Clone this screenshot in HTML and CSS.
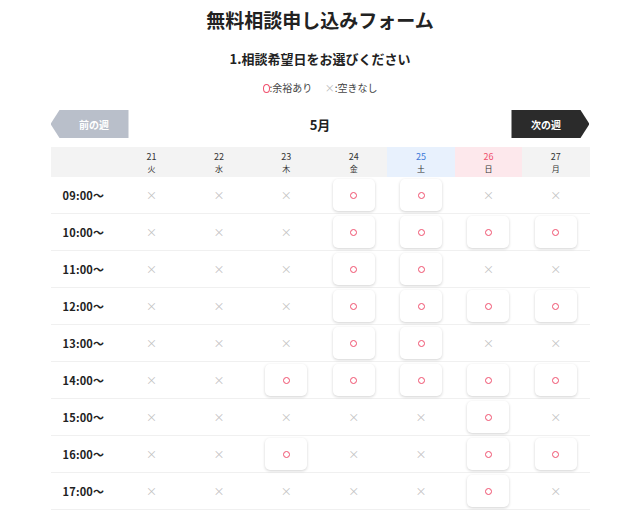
FILE: index.html
```html
<!DOCTYPE html>
<html lang="ja">
<head>
  <meta charset="UTF-8" />
  <meta name="viewport" content="width=device-width, initial-scale=1.0" />
  <title>無料相談申し込みフォーム</title>
  <link rel="stylesheet" href="styles.css">
</head>
<body>
  <h1>無料相談申し込みフォーム</h1>
  <h2>1.相談希望日をお選びください</h2>
  <p class="legend">
    <span class="mark-ok"></span>:余裕あり
    <span class="mark-ng">×</span>:空きなし
  </p>

  <div class="calendar">
    <div class="nav">
      <a class="btn-prev">前の週</a>
      <div class="month">5月</div>
      <a class="btn-next">次の週</a>
    </div>

    <div class="grid" id="grid">
      <div class="head"></div>
      <div class="head"><span class="d">21</span><span class="w">火</span></div>
      <div class="head"><span class="d">22</span><span class="w">水</span></div>
      <div class="head"><span class="d">23</span><span class="w">木</span></div>
      <div class="head"><span class="d">24</span><span class="w">金</span></div>
      <div class="head sat"><span class="d">25</span><span class="w">土</span></div>
      <div class="head sun"><span class="d">26</span><span class="w">日</span></div>
      <div class="head"><span class="d">27</span><span class="w">月</span></div>
    </div>
  </div>

  <script>
    // 0 = 空きなし, 1 = 余裕あり
    const slots = [
      ["09:00〜", [0,0,0,1,1,0,0]],
      ["10:00〜", [0,0,0,1,1,1,1]],
      ["11:00〜", [0,0,0,1,1,0,0]],
      ["12:00〜", [0,0,0,1,1,1,1]],
      ["13:00〜", [0,0,0,1,1,0,0]],
      ["14:00〜", [0,0,1,1,1,1,1]],
      ["15:00〜", [0,0,0,0,0,1,0]],
      ["16:00〜", [0,0,1,0,0,1,1]],
      ["17:00〜", [0,0,0,0,0,1,0]]
    ];

    const grid = document.getElementById("grid");
    slots.forEach(([time, days]) => {
      const t = document.createElement("div");
      t.className = "cell time";
      t.textContent = time;
      grid.appendChild(t);

      days.forEach(ok => {
        const c = document.createElement("div");
        c.className = "cell";
        if (ok) {
          c.innerHTML = '<button class="slot"><span class="ring"></span></button>';
        } else {
          c.innerHTML = '<span class="cross">×</span>';
        }
        grid.appendChild(c);
      });
    });
  </script>
</body>
</html>
```

FILE: styles.css
```css
body {
  margin: 0;
  background-color: #fff;
  color: #222;
  font-family: "Noto Sans CJK JP", "Noto Sans", sans-serif;
  text-align: center;
}
h1 {
  margin: 6px 0 0;
  font-size: 19px;
  line-height: 28px;
  font-weight: 700;
}
h2 {
  margin: 15px 0 0;
  font-size: 13px;
  line-height: 20px;
  font-weight: 700;
}
.legend {
  margin: 11px 0 0;
  font-size: 10px;
  line-height: 16px;
  color: #444;
}
.mark-ok {
  display: inline-block;
  width: 5px;
  height: 7px;
  border: 1.5px solid #f0506e;
  border-radius: 50%;
  vertical-align: -1px;
}
.mark-ng {
  margin-left: 10px;
  color: #bbb;
}
.calendar {
  width: 539px;
  margin: 14px auto 0;
}
.nav {
  display: flex;
  justify-content: space-between;
  align-items: center;
  height: 28px;
}
.btn-prev,
.btn-next {
  display: flex;
  align-items: center;
  justify-content: center;
  box-sizing: border-box;
  width: 78px;
  height: 28px;
  color: #fff;
  font-size: 10px;
  font-weight: 700;
}
.btn-prev {
  padding-left: 9px;
  background-color: #b9bfca;
  clip-path: polygon(9px 0, 100% 0, 100% 100%, 9px 100%, 0 50%);
}
.btn-next {
  padding-right: 9px;
  background-color: #2b2b2b;
  clip-path: polygon(0 0, calc(100% - 9px) 0, 100% 50%, calc(100% - 9px) 100%, 0 100%);
}
.month {
  font-size: 13px;
  font-weight: 700;
}
.grid {
  display: grid;
  grid-template-columns: repeat(8, 1fr);
  margin-top: 9px;
}
.head {
  display: flex;
  flex-direction: column;
  justify-content: center;
  height: 30px;
  background-color: #f3f3f3;
  color: #333;
}
.head .d {
  font-size: 9px;
  line-height: 12px;
}
.head .w {
  font-size: 8px;
  line-height: 11px;
}
.head.sat {
  background-color: #e8f1fd;
}
.head.sat .d {
  color: #3a78d8;
}
.head.sun {
  background-color: #fde8ec;
}
.head.sun .d {
  color: #f0506e;
}
.cell {
  display: flex;
  align-items: center;
  justify-content: center;
  height: 36px;
  border-bottom: 1px solid #f0f0f0;
}
.time {
  justify-content: flex-start;
  padding-left: 12px;
  font-size: 11px;
  font-weight: 700;
  color: #222;
  letter-spacing: 0.2px;
}
.cross {
  color: #c2c2c2;
  font-size: 11px;
}
.slot {
  display: flex;
  align-items: center;
  justify-content: center;
  width: 42px;
  height: 32px;
  padding: 0;
  border: none;
  border-radius: 5px;
  background-color: #fff;
  box-shadow: 0 1px 3px rgba(0, 0, 0, 0.18);
}
.ring {
  width: 5px;
  height: 5px;
  border: 1.5px solid #f0506e;
  border-radius: 50%;
}
```
